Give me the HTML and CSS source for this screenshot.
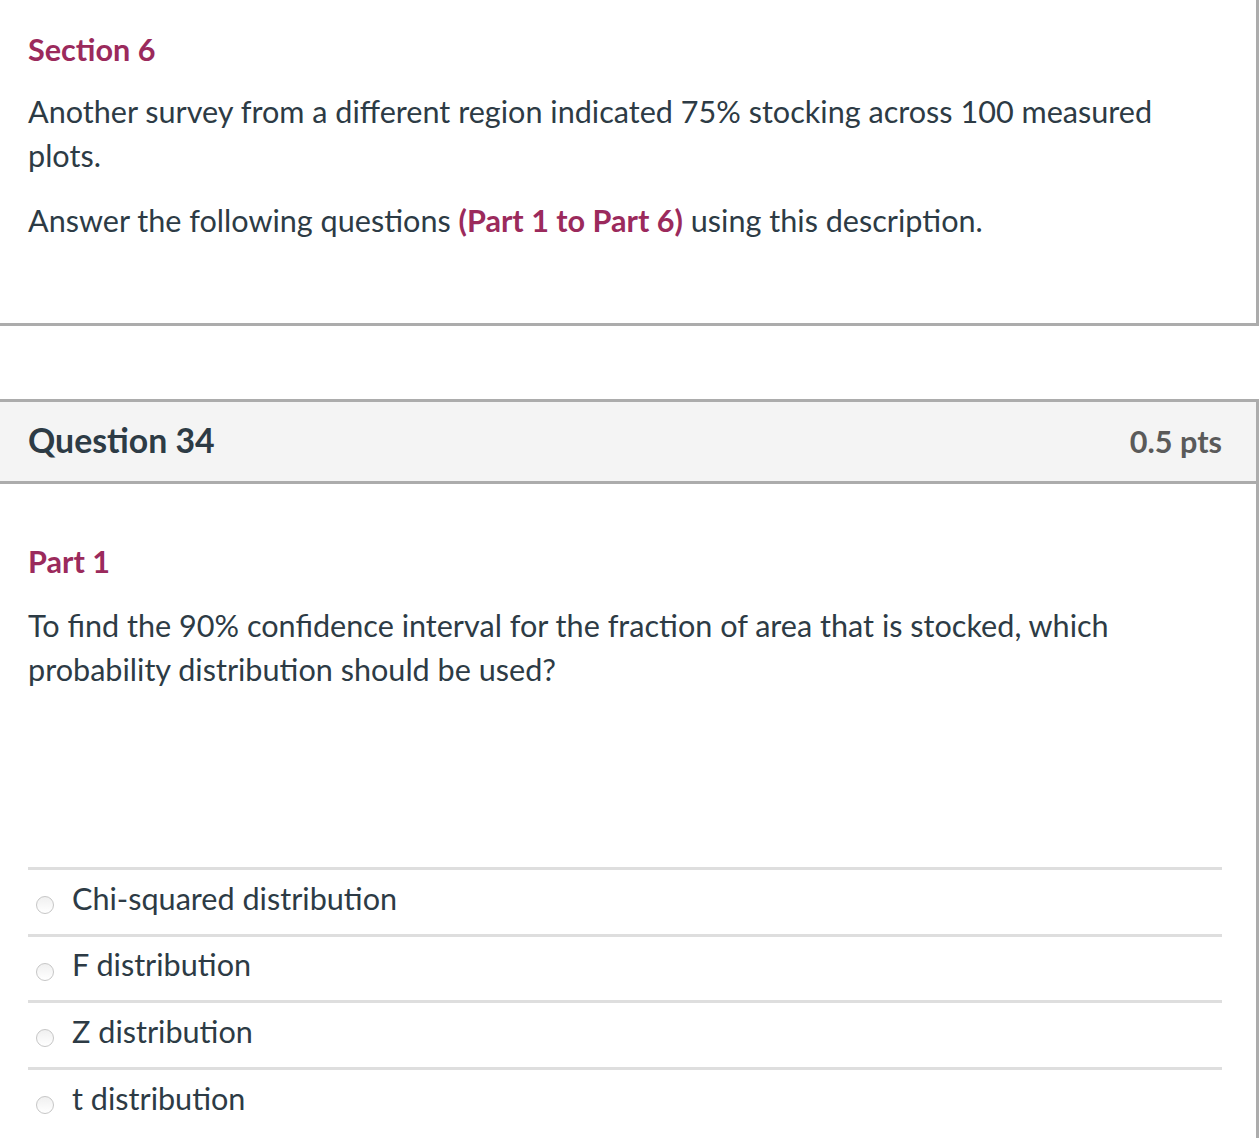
FILE: index.html
```html
<!DOCTYPE html>
<html lang="en">
<head>
<meta charset="utf-8">
<title>Quiz</title>
<link rel="stylesheet" href="styles.css">
</head>
<body>
<div class="page">
  <div class="section-box">
    <h2 class="section-title">Section 6</h2>
    <p class="text">Another survey from a different region indicated 75% stocking across 100 measured plots.</p>
    <p class="text">Answer the following questions <strong class="accent">(Part 1 to Part 6)</strong> using this description.</p>
  </div>

  <div class="question">
    <div class="q-header">
      <h3 class="q-title">Question 34</h3>
      <span class="q-pts">0.5 pts</span>
    </div>
    <div class="q-body">
      <h4 class="part-title">Part 1</h4>
      <p class="text">To find the 90% confidence interval for the fraction of area that is stocked, which probability distribution should be used?</p>
      <ul class="answers">
        <li class="answer"><span class="radio"></span><span class="answer-label">Chi-squared distribution</span></li>
        <li class="answer"><span class="radio"></span><span class="answer-label">F distribution</span></li>
        <li class="answer"><span class="radio"></span><span class="answer-label">Z distribution</span></li>
        <li class="answer"><span class="radio"></span><span class="answer-label">t distribution</span></li>
      </ul>
    </div>
  </div>
</div>
</body>
</html>
```

FILE: styles.css
```css
* { box-sizing: border-box; }

html, body {
  margin: 0;
  padding: 0;
  background: #ffffff;
}

body {
  font-family: Lato, "Open Sans", "Liberation Sans", sans-serif;
  color: #2d3b45;
  overflow: hidden;
}

.page {
  width: 1259px;
}

.section-box {
  border-right: 3px solid #acacac;
  border-bottom: 3px solid #acacac;
  padding: 28px 60px 45px 28px;
  height: 326px;
}

.section-title {
  margin: 0 0 18px;
  font-size: 30.6px;
  line-height: 44px;
  font-weight: 700;
  color: #9b2a5c;
}

.text {
  margin: 0 0 21px;
  font-size: 30.6px;
  line-height: 44px;
  font-weight: 400;
}

.accent {
  color: #9b2a5c;
  font-weight: 700;
}

.question {
  margin-top: 73px;
  border-top: 3px solid #acacac;
  border-right: 3px solid #acacac;
  height: 800px;
}

.q-header {
  display: flex;
  justify-content: space-between;
  align-items: center;
  height: 82px;
  padding: 0 34px 0 28px;
  background: #f4f4f4;
  border-bottom: 3px solid #acacac;
}

.q-title {
  margin: 0;
  font-size: 33.8px;
  font-weight: 700;
  color: #2d3b45;
  position: relative;
  top: -2px;
}

.q-pts {
  font-size: 30.6px;
  font-weight: 700;
  color: #5a5a5a;
}

.q-body {
  padding: 56px 34px 0 28px;
}

.part-title {
  margin: 0 0 20px;
  font-size: 30.6px;
  line-height: 44px;
  font-weight: 700;
  color: #9b2a5c;
}

.answers {
  list-style: none;
  margin: 175px 0 0;
  padding: 0;
}

.answer {
  display: flex;
  align-items: center;
  height: 66.6px;
  padding-bottom: 6px;
  border-top: 3px solid #dedede;
}

.radio {
  flex: none;
  width: 18px;
  height: 18px;
  margin: 13px 18px 0 8px;
  border-radius: 50%;
  border: 1px solid #c6c6c6;
  background: linear-gradient(#f0f0f0, #ffffff);
}

.answer-label {
  font-size: 30.6px;
  line-height: 44px;
}
```
